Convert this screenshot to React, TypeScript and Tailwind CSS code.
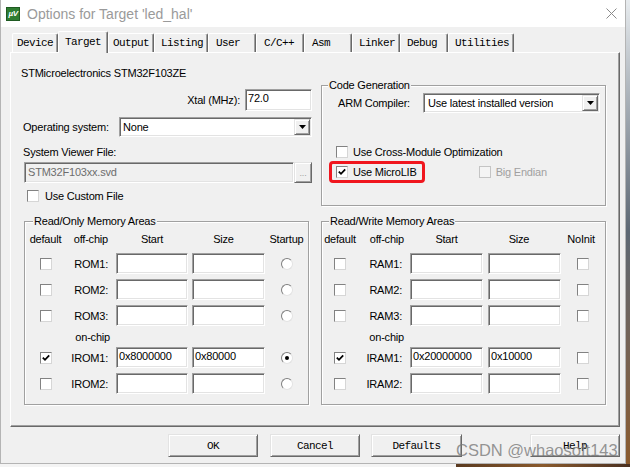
import React from "react";

const sans =
  "font-['Liberation_Sans',Arial,sans-serif] text-[11px] tracking-[-0.2px] leading-[14px] text-black";
const mono =
  "font-['Liberation_Mono','Courier_New',monospace] text-[11px] tracking-[-0.6px] text-black";

const sunken =
  "border border-t-[#a0a0a0] border-l-[#a0a0a0] border-b-white border-r-white shadow-[inset_1px_1px_0_#696969,inset_-1px_-1px_0_#e3e3e3]";
const raised =
  "border border-t-[#e3e3e3] border-l-[#e3e3e3] border-b-[#696969] border-r-[#696969] shadow-[inset_1px_1px_0_#fff,inset_-1px_-1px_0_#a0a0a0]";

function CheckBox({ checked = false, disabled = false }: { checked?: boolean; disabled?: boolean }) {
  return (
    <div
      className={
        disabled
          ? "w-[12px] h-[12px] shrink-0 bg-[#f4f4f4] border border-[#c4c4c4]"
          : "w-[12px] h-[12px] shrink-0 bg-white border border-t-[#828282] border-l-[#828282] border-b-[#d6d6d6] border-r-[#d6d6d6] flex items-center justify-center"
      }
    >
      {checked && (
        <svg width="10" height="10" viewBox="0 0 10 10">
          <path d="M1.8 4.6 L4 6.8 L8.2 2.4" stroke="#000" strokeWidth="1.8" fill="none" />
        </svg>
      )}
    </div>
  );
}

function Radio({ on = false }: { on?: boolean }) {
  return (
    <div className="w-[12px] h-[12px] rounded-full bg-white border border-t-[#7e7e7e] border-l-[#7e7e7e] border-b-[#e2e2e2] border-r-[#e2e2e2] flex items-center justify-center">
      {on && <div className="w-[4px] h-[4px] rounded-full bg-black" />}
    </div>
  );
}

function Arrow() {
  return (
    <div className={`w-[16px] h-[16px] bg-[#f0f0f0] ${raised} flex items-center justify-center shrink-0`}>
      <svg width="7" height="4" viewBox="0 0 7 4">
        <polygon points="0,0 7,0 3.5,4" fill="#000" />
      </svg>
    </div>
  );
}

function Field({ value = "", w }: { value?: string; w: string }) {
  return (
    <div className={`${w} h-[21px] bg-white ${sunken} px-[2px] pt-[1px] leading-[14px] overflow-hidden whitespace-nowrap`}>
      {value}
    </div>
  );
}

function Group({
  title,
  className,
  legendClass,
  children,
}: {
  title: string;
  className: string;
  legendClass: string;
  children?: React.ReactNode;
}) {
  return (
    <div className={`relative border border-[#a0a0a0] shadow-[inset_1px_1px_0_#fff,1px_1px_0_#fff] ${className}`}>
      <div className={`absolute -top-[8px] bg-[#f0f0f0] px-[1px] leading-[14px] whitespace-nowrap ${legendClass}`}>
        {title}
      </div>
      {children}
    </div>
  );
}

const tabs = [
  { n: "Device", w: "w-[46px] pl-[4px]" },
  { n: "Target", w: "w-[50px] pl-[6px]", sel: true },
  { n: "Output", w: "w-[46px] pl-[4px]" },
  { n: "Listing", w: "w-[54px] pl-[6px]" },
  { n: "User", w: "w-[48px] pl-[7px]" },
  { n: "C/C++", w: "w-[48px] pl-[7px]" },
  { n: "Asm", w: "w-[48px] pl-[7px]" },
  { n: "Linker", w: "w-[48px] pl-[6px]" },
  { n: "Debug", w: "w-[48px] pl-[6px]" },
  { n: "Utilities", w: "w-[66px] pl-[6px]" },
];

type Row = { label: string; start?: string; size?: string; checked?: boolean; on?: boolean };

function ROMGroup() {
  const rows: Row[] = [{ label: "ROM1:" }, { label: "ROM2:" }, { label: "ROM3:" }];
  const on: Row[] = [
    { label: "IROM1:", start: "0x8000000", size: "0x80000", checked: true, on: true },
    { label: "IROM2:" },
  ];
  const line = (r: Row, first: boolean) => (
    <div key={r.label} className={`flex items-center h-[21px] ${first ? "" : "mt-[5px]"}`}>
      <div className="w-[41px] flex justify-center">
        <CheckBox checked={r.checked} />
      </div>
      <div className="w-[50px] text-right pr-[8px]">{r.label}</div>
      <Field w="w-[72px]" value={r.start} />
      <div className="ml-[4px]">
        <Field w="w-[73px]" value={r.size} />
      </div>
      <div className="w-[43px] flex justify-center">
        <Radio on={r.on} />
      </div>
    </div>
  );
  return (
    <Group title="Read/Only Memory Areas" className="ml-[13px] w-[285px] h-[184px]" legendClass="left-[8px]">
      <div className="mt-[7px] h-[20px] flex items-center">
        <div className="w-[41px] text-center">default</div>
        <div className="w-[50px] text-right pr-[8px]">off-chip</div>
        <div className="w-[72px] text-center">Start</div>
        <div className="w-[77px] text-center pr-[6px]">Size</div>
        <div className="w-[43px] text-center">Startup</div>
      </div>
      <div className="mt-[4px]">{rows.map((r, i) => line(r, i === 0))}</div>
      <div className="h-[21px] flex items-center">
        <div className="w-[91px] text-right pr-[6px]">on-chip</div>
      </div>
      <div>{on.map((r, i) => line(r, i === 0))}</div>
    </Group>
  );
}

function RAMGroup() {
  const rows: Row[] = [{ label: "RAM1:" }, { label: "RAM2:" }, { label: "RAM3:" }];
  const on: Row[] = [
    { label: "IRAM1:", start: "0x20000000", size: "0x10000", checked: true },
    { label: "IRAM2:" },
  ];
  const line = (r: Row, first: boolean) => (
    <div key={r.label} className={`flex items-center h-[21px] ${first ? "" : "mt-[5px]"}`}>
      <div className="w-[36px] flex justify-center">
        <CheckBox checked={r.checked} />
      </div>
      <div className="w-[52px] text-right pr-[8px]">{r.label}</div>
      <Field w="w-[73px]" value={r.start} />
      <div className="ml-[5px]">
        <Field w="w-[73px]" value={r.size} />
      </div>
      <div className="w-[44px] flex justify-center">
        <CheckBox />
      </div>
    </div>
  );
  return (
    <Group title="Read/Write Memory Areas" className="ml-[12px] w-[285px] h-[184px]" legendClass="left-[7px]">
      <div className="mt-[7px] h-[20px] flex items-center">
        <div className="w-[36px] text-center">default</div>
        <div className="w-[52px] text-right pr-[6px]">off-chip</div>
        <div className="w-[73px] text-center">Start</div>
        <div className="w-[78px] text-center pr-[6px]">Size</div>
        <div className="w-[44px] text-center pr-[4px]">NoInit</div>
      </div>
      <div className="mt-[4px]">{rows.map((r, i) => line(r, i === 0))}</div>
      <div className="h-[21px] flex items-center">
        <div className="w-[88px] text-right pr-[6px]">on-chip</div>
      </div>
      <div>{on.map((r, i) => line(r, i === 0))}</div>
    </Group>
  );
}

export default function App() {
  return (
    <div className={`relative w-[630px] h-[467px] overflow-hidden bg-[#f4f4f4] flex flex-col ${sans}`}>
      <div className="flex h-[464px]">
        {/* window */}
        <div className="w-[626px] h-[464px] flex flex-col border border-t-0 border-[#b4b4b4] bg-[#f0f0f0]">
          {/* title bar */}
          <div className="h-[27px] bg-white flex items-center shrink-0">
            <div className="ml-[5px] w-[14px] h-[14px] bg-[#2f7d32] border border-[#1f5a22] flex items-center justify-center">
              <span className="text-white text-[8px] font-bold leading-none tracking-[-0.5px] italic">µV</span>
            </div>
            <div className="ml-[7px] font-['Liberation_Sans',Arial,sans-serif] text-[14px] tracking-normal text-[#9a9a9a]">
              Options for Target 'led_hal'
            </div>
            <svg className="ml-auto mr-[8px]" width="11" height="11" viewBox="0 0 11 11">
              <path d="M0.5 0.5 L10.5 10.5 M10.5 0.5 L0.5 10.5" stroke="#8a8a8a" strokeWidth="1" />
            </svg>
          </div>

          {/* body */}
          <div className="flex-1 flex flex-col pt-[4px]">
            {/* tabs */}
            <div className="ml-[11px] h-[21px] flex items-end">
              {tabs.map((t) => (
                <div
                  key={t.n}
                  className={`${t.w} ${mono} flex items-center rounded-t-[2px] border-t border-l border-r border-t-white border-l-white border-r-[#696969] shadow-[inset_-1px_0_0_#a0a0a0] ${
                    t.sel ? "h-[22px] -mb-px relative z-10 bg-[#f0f0f0] pb-[2px]" : "h-[19px]"
                  }`}
                >
                  {t.n}
                </div>
              ))}
            </div>

            {/* panel */}
            <div className="ml-[9px] w-[610px] h-[375px] bg-[#f0f0f0] border border-t-white border-l-white border-r-[#696969] border-b-[#696969] shadow-[inset_-1px_-1px_0_#a0a0a0] flex flex-col">
              {/* top section */}
              <div className="h-[168px] flex">
                <div className="ml-[11px] w-[290px] flex flex-col">
                  <div className="mt-[13px] -ml-[1px]">STMicroelectronics STM32F103ZE</div>
                  <div className="mt-[9px] h-[22px] flex items-center justify-end">
                    <div className="mr-[5px]">Xtal (MHz):</div>
                    <div className={`w-[67px] h-[22px] bg-white ${sunken} px-[2px] leading-[14px] pt-[1px]`}>72.0</div>
                  </div>
                  <div className="mt-[6px] h-[20px] flex items-center">
                    <div className="ml-[1px]">Operating system:</div>
                    <div className={`ml-auto w-[193px] h-[20px] bg-white ${sunken} flex items-center pl-[3px] pr-[1px]`}>
                      <div className="flex-1">None</div>
                      <Arrow />
                    </div>
                  </div>
                  <div className="mt-[8px] ml-[1px]">System Viewer File:</div>
                  <div className="mt-[3px] h-[21px] flex">
                    <div className={`ml-[2px] w-[270px] h-[21px] bg-[#f0f0f0] ${sunken} px-[3px] pt-[2px] text-[#6d6d6d]`}>
                      STM32F103xx.svd
                    </div>
                    <div className={`w-[18px] h-[21px] bg-[#f0f0f0] ${raised} flex items-end justify-center pb-[4px] text-[#a0a0a0] text-[9px] leading-none`}>
                      ...
                    </div>
                  </div>
                  <div className="mt-[6px] flex items-center">
                    <div className="ml-[5px]">
                      <CheckBox />
                    </div>
                    <div className="ml-[6px]">Use Custom File</div>
                  </div>
                </div>

                <Group title="Code Generation" className="ml-[9px] mt-[32px] w-[285px] h-[121px]" legendClass="left-[6px]">
                  <div className="mt-[7px] h-[20px] flex items-center pl-[16px]">
                    <div>ARM Compiler:</div>
                    <div className={`ml-auto mr-[5px] w-[177px] h-[20px] bg-white ${sunken} flex items-center pl-[4px] pr-[1px]`}>
                      <div className="flex-1">Use latest installed version</div>
                      <Arrow />
                    </div>
                  </div>
                  <div className="mt-[33px] h-[12px] flex items-center pl-[14px]">
                    <CheckBox />
                    <div className="ml-[5px]">Use Cross-Module Optimization</div>
                  </div>
                  <div className="mt-[3px] flex items-center pl-[7px]">
                    <div className="h-[22px] border-[3px] border-[#f0161e] rounded-[4px] flex items-center pl-[4px] pr-[5px]">
                      <CheckBox checked />
                      <div className="ml-[5px]">Use MicroLIB</div>
                    </div>
                    <div className="ml-[54px] flex items-center">
                      <CheckBox disabled />
                      <div className="ml-[5px] text-[#a0a0a0]">Big Endian</div>
                    </div>
                  </div>
                </Group>
              </div>

              {/* bottom groups */}
              <div className="flex">
                <ROMGroup />
                <RAMGroup />
              </div>
            </div>

            {/* buttons */}
            <div className="mt-[7px] h-[23px] flex ml-[167px]">
              <div className={`w-[90px] h-[23px] ${raised} bg-[#f0f0f0] ${mono} flex items-center justify-center`}>OK</div>
              <div className={`ml-[12px] w-[90px] h-[23px] ${raised} bg-[#f0f0f0] ${mono} flex items-center justify-center`}>Cancel</div>
              <div className={`ml-[11px] w-[91px] h-[23px] ${raised} bg-[#f0f0f0] ${mono} flex items-center justify-center`}>Defaults</div>
              <div className={`ml-[68px] w-[90px] h-[23px] ${raised} bg-[#f0f0f0] ${mono} flex items-center justify-center`}>Help</div>
            </div>
          </div>
        </div>
        {/* desktop strip on the right */}
        <div className="w-[4px] h-[464px] bg-gradient-to-b from-[#e8ecef] via-[#5d6874] to-[#8a5a2c]" />
      </div>
      <div className="h-[3px] flex">
        <div className="w-[456px] bg-[#f4f4f4]" />
        <div className="flex-1 bg-gradient-to-r from-[#5a3a20] via-[#8a5a2c] to-[#4a3020]" />
      </div>

      <div className="absolute left-[456px] top-[440px] font-['Liberation_Sans',Arial,sans-serif] text-[16.5px] tracking-normal leading-[20px] text-[#7a7a7a]/80 whitespace-nowrap">
        CSDN @whaosoft143
      </div>
    </div>
  );
}
